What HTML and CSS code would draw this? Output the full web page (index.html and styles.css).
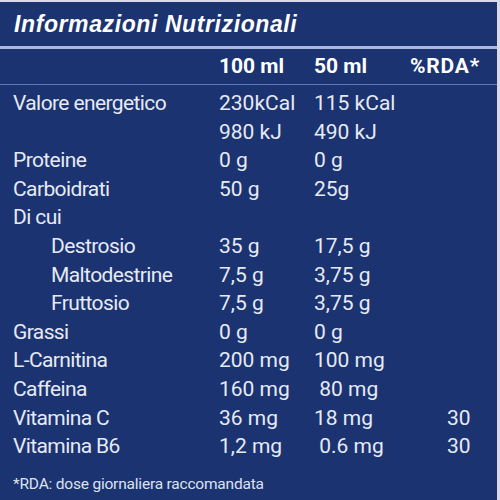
FILE: index.html
```html
<!DOCTYPE html>
<html lang="it">
<head>
    <meta charset="UTF-8">
    <title>Informazioni Nutrizionali</title>
    <link rel="stylesheet" href="styles.css">
</head>
<body>
    <div class="panel">
        <h1 class="title">Informazioni Nutrizionali</h1>
        <div class="row head">
            <span></span><span>100 ml</span><span>50 ml</span><span class="rda">%RDA*</span>
        </div>
        <div class="rows">
            <div class="row"><span>Valore energetico</span><span>230kCal</span><span>115 kCal</span><span></span></div>
            <div class="row"><span></span><span>980 kJ</span><span>490 kJ</span><span></span></div>
            <div class="row"><span>Proteine</span><span>0 g</span><span>0 g</span><span></span></div>
            <div class="row"><span>Carboidrati</span><span>50 g</span><span>25g</span><span></span></div>
            <div class="row"><span>Di cui</span><span></span><span></span><span></span></div>
            <div class="row sub"><span>Destrosio</span><span>35 g</span><span>17,5 g</span><span></span></div>
            <div class="row sub"><span>Maltodestrine</span><span>7,5 g</span><span>3,75 g</span><span></span></div>
            <div class="row sub"><span>Fruttosio</span><span>7,5 g</span><span>3,75 g</span><span></span></div>
            <div class="row"><span>Grassi</span><span>0 g</span><span>0 g</span><span></span></div>
            <div class="row"><span>L-Carnitina</span><span>200 mg</span><span>100 mg</span><span></span></div>
            <div class="row"><span>Caffeina</span><span>160 mg</span><span>&nbsp;80 mg</span><span></span></div>
            <div class="row"><span>Vitamina C</span><span>36 mg</span><span>18 mg</span><span class="pct">30</span></div>
            <div class="row"><span>Vitamina B6</span><span>1,2 mg</span><span>&nbsp;0.6 mg</span><span class="pct">30</span></div>
        </div>
        <p class="note">*RDA: dose giornaliera raccomandata</p>
    </div>
</body>
</html>
```

FILE: styles.css
```css
body {
    margin: 0;
    padding: 0;
    background: #d9dce4;
    font-family: Roboto, "Liberation Sans", sans-serif;
}

.panel {
    width: 497px;
    height: 498px;
    margin-top: 2px;
    background: #1b3371;
    color: #e6eaf4;
    overflow: hidden;
}

.title {
    margin: 0;
    height: 47px;
    padding: 9px 0 0 14px;
    box-sizing: border-box;
    font-family: "Liberation Sans", sans-serif;
    font-size: 23px;
    font-weight: bold;
    font-style: italic;
    letter-spacing: 0.6px;
    color: #fff;
    border-bottom: 3px solid #aab6dc;
}

.row {
    display: grid;
    grid-template-columns: 206px 95px 96px 1fr;
    padding-left: 13px;
    font-size: 21px;
    line-height: 28.6px;
    white-space: nowrap;
}

.row span:first-child {
    letter-spacing: -0.6px;
}

.row.head {
    height: 35px;
    line-height: 34px;
    font-weight: bold;
    color: #fff;
    border-bottom: 1px solid #6277b0;
}

.row.head .rda {
    letter-spacing: 0.8px;
}

.rows {
    padding-top: 4px;
}

.row.sub span:first-child {
    padding-left: 38px;
}

.pct {
    padding-left: 37px;
}

.note {
    margin: 14px 0 0 13px;
    font-size: 15.5px;
    letter-spacing: -0.2px;
    color: #dde2ef;
}
```
